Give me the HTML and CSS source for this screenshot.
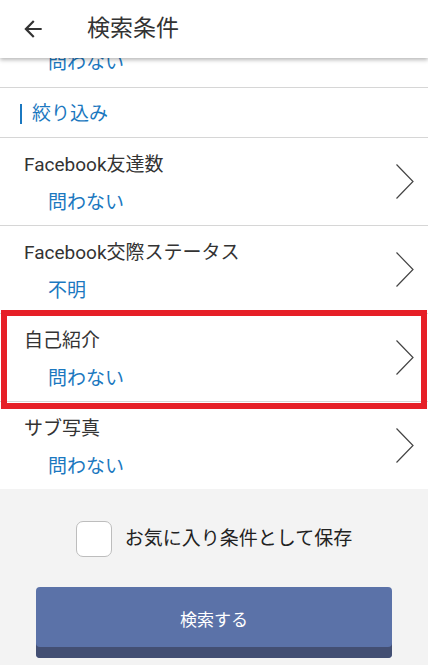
FILE: index.html
```html
<!DOCTYPE html>
<html lang="ja">
<head>
<meta charset="utf-8">
<title>検索条件</title>
<link rel="stylesheet" href="styles.css">
</head>
<body>
<header class="topbar">
  <svg class="back" viewBox="0 0 24 24" width="26" height="26"><path d="M20 11H7.83l5.59-5.59L12 4l-8 8 8 8 1.41-1.41L7.83 13H20v-2z" fill="#333"/></svg>
  <h1 class="title">検索条件</h1>
</header>
<main class="list">
  <div class="clip-row"><div class="row-value clipped">問わない</div></div>
  <div class="section-head"><span class="section-label">絞り込み</span></div>
  <div class="row">
    <div class="row-text">
      <div class="row-label">Facebook友達数</div>
      <div class="row-value">問わない</div>
    </div>
    <svg class="chev" viewBox="0 0 20 38" width="20" height="38"><polyline points="1.5,1.5 18,18.5 1.5,35.5" fill="none" stroke="#444" stroke-width="1.2"/></svg>
  </div>
  <div class="row">
    <div class="row-text">
      <div class="row-label">Facebook交際ステータス</div>
      <div class="row-value">不明</div>
    </div>
    <svg class="chev" viewBox="0 0 20 38" width="20" height="38"><polyline points="1.5,1.5 18,18.5 1.5,35.5" fill="none" stroke="#444" stroke-width="1.2"/></svg>
  </div>
  <div class="row highlighted">
    <div class="row-text">
      <div class="row-label">自己紹介</div>
      <div class="row-value">問わない</div>
    </div>
    <svg class="chev" viewBox="0 0 20 38" width="20" height="38"><polyline points="1.5,1.5 18,18.5 1.5,35.5" fill="none" stroke="#444" stroke-width="1.2"/></svg>
    <div class="red-frame"></div>
  </div>
  <div class="row last">
    <div class="row-text">
      <div class="row-label">サブ写真</div>
      <div class="row-value">問わない</div>
    </div>
    <svg class="chev" viewBox="0 0 20 38" width="20" height="38"><polyline points="1.5,1.5 18,18.5 1.5,35.5" fill="none" stroke="#444" stroke-width="1.2"/></svg>
  </div>
</main>
<footer class="footer">
  <label class="save">
    <span class="checkbox"></span>
    <span class="save-text">お気に入り条件として保存</span>
  </label>
  <button class="search-btn">検索する</button>
</footer>
</body>
</html>
```
FILE: styles.css
```css
html, body {
  margin: 0;
  padding: 0;
  background: #f3f3f3;
  font-family: Roboto, "Noto Sans CJK JP", sans-serif;
  color: #333;
}
body {
  height: 665px;
  overflow: hidden;
}
.topbar {
  position: relative;
  z-index: 2;
  height: 58px;
  background: #fff;
  display: flex;
  align-items: center;
  padding-left: 20px;
  box-shadow: 0 2px 4px rgba(0,0,0,0.28);
}
.back {
  display: block;
}
.title {
  margin: 0 0 0 41px;
  font-size: 23px;
  font-weight: 400;
  line-height: 30px;
  color: #333;
}
.list {
  background: #fff;
}
.clip-row {
  height: 29px;
  overflow: hidden;
  border-bottom: 1px solid #d6d6d6;
  padding-left: 48px;
}
.clipped {
  margin-top: -7px;
}
.section-head {
  height: 50px;
  box-sizing: border-box;
  padding: 3px 0 0 20px;
  border-bottom: 1px solid #d6d6d6;
  display: flex;
  align-items: center;
}
.section-label {
  border-left: 2px solid #1b78c0;
  padding-left: 10px;
  font-size: 19px;
  line-height: 20px;
  color: #1b78c0;
}
.row {
  position: relative;
  height: 87px;
  border-bottom: 1px solid #d6d6d6;
  display: flex;
  align-items: center;
  padding: 0 13px 0 24px;
}
.row.last {
  border-bottom: none;
}
.row-text {
  flex: 1;
  display: flex;
  flex-direction: column;
  gap: 14px;
  padding-top: 4px;
}
.row-label {
  font-size: 19px;
  line-height: 24px;
  color: #333;
}
.row-value {
  font-size: 19px;
  line-height: 24px;
  color: #1b78c0;
  padding-left: 24px;
}
.clip-row .row-value {
  padding-left: 0;
}
.chev {
  display: block;
  flex: none;
}
.red-frame {
  position: absolute;
  left: 1px;
  right: 1px;
  top: -4px;
  bottom: -8px;
  border: 6px solid #e61f27;
  pointer-events: none;
}
.footer {
  background: #f3f3f3;
  padding: 32px 36px 0;
  display: flex;
  flex-direction: column;
  align-items: center;
}
.save {
  display: flex;
  align-items: center;
  gap: 13px;
  height: 36px;
}
.checkbox {
  width: 34px;
  height: 34px;
  border: 1px solid #bdbdbd;
  border-radius: 7px;
  background: #fff;
}
.save-text {
  font-size: 19px;
  line-height: 24px;
  color: #222;
}
.search-btn {
  margin-top: 30px;
  width: 356px;
  height: 71px;
  border: none;
  border-radius: 4px;
  background: #5b72a8;
  box-shadow: inset 0 -11px 0 #434f73;
  color: #fff;
  font-family: Roboto, "Noto Sans CJK JP", sans-serif;
  font-size: 17px;
  padding: 0 0 8px;
}
```
